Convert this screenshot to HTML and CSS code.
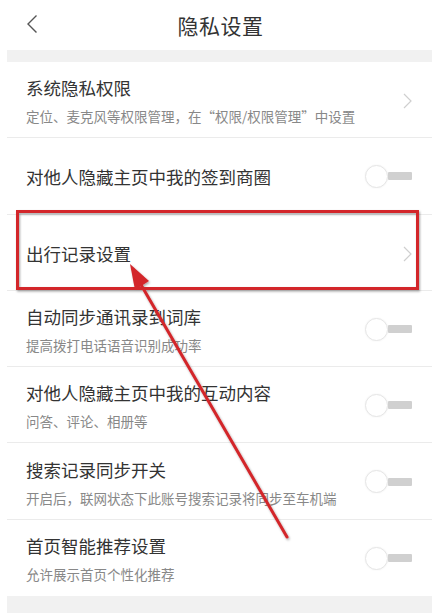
FILE: index.html
```html
<!DOCTYPE html>
<html lang="zh">
<head>
<meta charset="utf-8">
<link rel="stylesheet" href="styles.css">
</head>
<body>
<div class="page">
  <header class="topbar">
    <svg class="back" width="12" height="20" viewBox="0 0 12 20"><path d="M10.5 1.5 L2 10 L10.5 18.5" fill="none" stroke="#555" stroke-width="1.4"/></svg>
    <h1 class="title">隐私设置</h1>
  </header>
  <div class="band"></div>
  <ul class="list">
    <li class="row">
      <div class="texts">
        <div class="name">系统隐私权限</div>
        <div class="desc">定位、麦克风等权限管理，在“权限/权限管理”中设置</div>
      </div>
      <svg class="chev" width="9" height="16" viewBox="0 0 9 16"><path d="M1 1 L8 8 L1 15" fill="none" stroke="#cfcfcf" stroke-width="1.2"/></svg>
    </li>
    <li class="row">
      <div class="texts"><div class="name">对他人隐藏主页中我的签到商圈</div></div>
      <span class="toggle"><span class="knob"></span><span class="track"></span></span>
    </li>
    <li class="row">
      <div class="texts"><div class="name">出行记录设置</div></div>
      <svg class="chev" width="9" height="16" viewBox="0 0 9 16"><path d="M1 1 L8 8 L1 15" fill="none" stroke="#cfcfcf" stroke-width="1.2"/></svg>
    </li>
    <li class="row">
      <div class="texts">
        <div class="name">自动同步通讯录到词库</div>
        <div class="desc">提高拨打电话语音识别成功率</div>
      </div>
      <span class="toggle"><span class="knob"></span><span class="track"></span></span>
    </li>
    <li class="row">
      <div class="texts">
        <div class="name">对他人隐藏主页中我的互动内容</div>
        <div class="desc">问答、评论、相册等</div>
      </div>
      <span class="toggle"><span class="knob"></span><span class="track"></span></span>
    </li>
    <li class="row">
      <div class="texts">
        <div class="name">搜索记录同步开关</div>
        <div class="desc">开启后，联网状态下此账号搜索记录将同步至车机端</div>
      </div>
      <span class="toggle"><span class="knob"></span><span class="track"></span></span>
    </li>
    <li class="row last">
      <div class="texts">
        <div class="name">首页智能推荐设置</div>
        <div class="desc">允许展示首页个性化推荐</div>
      </div>
      <span class="toggle"><span class="knob"></span><span class="track"></span></span>
    </li>
  </ul>
  <div class="band bottom"></div>
</div>
<svg class="annot" width="442" height="613" viewBox="0 0 442 613">
  <defs>
    <filter id="sh" x="-10%" y="-10%" width="120%" height="120%">
      <feDropShadow dx="1" dy="1.5" stdDeviation="1.2" flood-color="#000" flood-opacity="0.35"/>
    </filter>
  </defs>
  <g filter="url(#sh)">
    <rect x="17.5" y="211.5" width="400" height="77" fill="none" stroke="#d3272b" stroke-width="3"/>
    <line x1="287" y1="537" x2="140" y2="283" stroke="#d3272b" stroke-width="3" stroke-linecap="round"/>
    <polygon points="130,264 149,281 135,290" fill="#d3272b"/>
  </g>
</svg>
</body>
</html>
```
FILE: styles.css
```css
html, body {
  margin: 0;
  padding: 0;
  background: #fff;
}
body {
  font-family: "Noto Sans CJK SC", "Noto Sans", sans-serif;
  width: 442px;
  height: 613px;
  overflow: hidden;
  position: relative;
}
.page {
  margin: 0 10px 0 7px;
  display: flex;
  flex-direction: column;
}
.topbar {
  height: 50px;
  display: flex;
  align-items: center;
  justify-content: center;
  position: relative;
}
.back {
  position: absolute;
  left: 19px;
  top: 14px;
}
.title {
  margin: 0;
  font-size: 21px;
  font-weight: normal;
  color: #333;
  letter-spacing: 0.5px;
  padding-left: 2px;
}
.band {
  height: 12px;
  background: #f1f1f1;
}
.band.bottom {
  height: 20px;
}
.list {
  list-style: none;
  margin: 0;
  padding: 0;
}
.row {
  height: 76.3px;
  box-sizing: border-box;
  border-bottom: 1px solid #ebebeb;
  display: flex;
  align-items: center;
  justify-content: space-between;
  padding: 3px 20px 0 19px;
}
.row.last {
  border-bottom: none;
}
.texts {
  display: flex;
  flex-direction: column;
}
.name {
  font-size: 17.5px;
  line-height: 24px;
  color: #333;
}
.desc {
  font-size: 13.5px;
  line-height: 20px;
  color: #888;
  margin-top: 6px;
}
.chev {
  margin-right: 0;
}
.toggle {
  display: flex;
  align-items: center;
  margin-top: -2px;
}
.knob {
  width: 21px;
  height: 21px;
  border-radius: 50%;
  background: #fff;
  border: 1px solid #e6e6e6;
  box-shadow: 0 0 2px rgba(0,0,0,0.06);
}
.track {
  width: 24px;
  height: 8px;
  background: #d0d0d0;
  border-radius: 1px;
  margin-left: 0;
}
.annot {
  position: absolute;
  left: 0;
  top: 0;
  pointer-events: none;
}
```
